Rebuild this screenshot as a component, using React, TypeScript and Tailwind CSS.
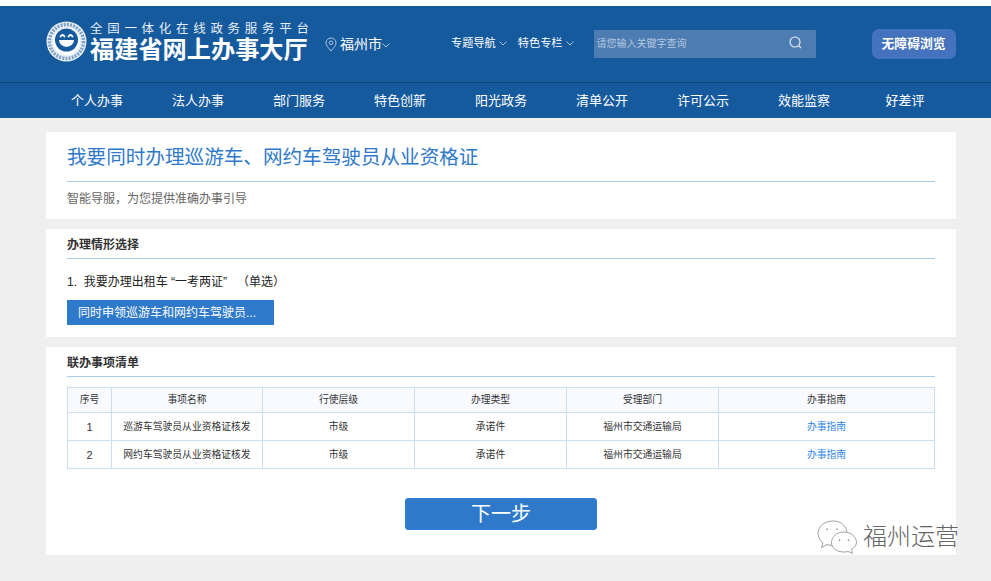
const navItems = ['个人办事', '法人办事', '部门服务', '特色创新', '阳光政务', '清单公开', '许可公示', '效能监察', '好差评']

const rows = [
  { id: 1, name: '巡游车驾驶员从业资格证核发' },
  { id: 2, name: '网约车驾驶员从业资格证核发' },
]

const Chevron = ({ className }: { className: string }) => (
  <svg viewBox="0 0 8 5" className={className} fill="none" stroke="currentColor" strokeWidth="1">
    <path d="M0.5 0.5 L4 4 L7.5 0.5" />
  </svg>
)

const Logo = () => (
  <svg viewBox="0 0 41 41" className="w-[41px] h-[41px] shrink-0">
    <circle cx="20.5" cy="20.5" r="20" fill="#e9eff6" />
    <circle cx="20.5" cy="20.5" r="17" fill="none" stroke="#7fa3c8" strokeWidth="3.5" strokeDasharray="2 1.2" />
    <circle cx="20.5" cy="20.5" r="13.5" fill="#fff" />
    <circle cx="20.5" cy="19" r="11.5" fill="#165a9e" />
    <path d="M13 19 H28 C27.5 28 13.5 28 13 19 Z" fill="#fff" />
    <path d="M14.5 15.5 Q16.5 12.5 18.5 15.5 M22.5 15.5 Q24.5 12.5 26.5 15.5" fill="none" stroke="#fff" strokeWidth="1.8" strokeLinecap="round" />
  </svg>
)

const Watermark = () => (
  <div className="absolute left-[817px] top-[519px] flex items-center gap-[6px]">
    <svg viewBox="0 0 40 35" className="w-[40px] h-[35px]" fill="#fff" stroke="#8a8a8a" strokeWidth="0.8">
      <path d="M16 2 C7 2 1 8 1 14.5 C1 18.5 3.5 22 6 24 L4.5 28.5 L10 25.5 C12 26.2 14 26.5 16 26.5 C25 26.5 30 20.5 30 14.5 C30 8 25 2 16 2 Z" />
      <path d="M27 13 C19.5 13 14.5 18 14.5 23.5 C14.5 29 19.5 33 27 33 C28.5 33 30 32.8 31 32.4 L35.5 34.5 L34.5 30.5 C37.5 28.5 39.5 26 39.5 23.5 C39.5 18 34 13 27 13 Z" />
      <path d="M10 9.5 v1.5 M20 9.5 v1.5 M22.5 20.5 v1.5 M31.5 20.5 v1.5" strokeWidth="1.4" />
    </svg>
    <span className="text-[24px] leading-none font-light text-[#666]">福州运营</span>
  </div>
)

const App = () => {
  return (
    <div className="relative w-[991px] h-[581px] overflow-hidden bg-[#efefef] pt-[6px] font-['Liberation_Sans','Noto_Sans_CJK_SC',sans-serif] before:absolute before:left-0 before:top-0 before:h-[6px] before:w-full before:bg-white">
      <header className="bg-[#165a9e] text-white">
        <div className="h-[77px] border-b border-[#0e4478] flex items-center pl-[46px]">
          <div className="flex items-center -mt-[5px]">
            <Logo />
            <div className="ml-[3px] w-[222px] mt-[1px]">
              <div className="text-[12.5px] leading-[15px] tracking-[4.7px] whitespace-nowrap text-[#e6edf5]">全国一体化在线政务服务平台</div>
              <div className="text-[24.2px] leading-[25px] font-bold whitespace-nowrap">福建省网上办事大厅</div>
            </div>
          </div>
          <svg viewBox="0 0 12 15" className="w-[12px] h-[15px] ml-[13px] mt-[1px] text-[#a9c2dc]" fill="none" stroke="currentColor" strokeWidth="1">
            <path d="M6 14 C3 10.5 1 8.5 1 5.8 C1 3 3.2 1 6 1 C8.8 1 11 3 11 5.8 C11 8.5 9 10.5 6 14 Z" />
            <circle cx="6" cy="5.8" r="1.8" />
          </svg>
          <span className="ml-[3px] text-[14px] leading-none">福州市</span>
          <Chevron className="w-[8px] h-[5px] mt-[2px] text-[#a9c2dc]" />
          <div className="ml-[61px] flex items-center -mt-[1px]">
            <span className="text-[11.2px] leading-none">专题导航</span>
            <Chevron className="w-[8px] h-[5px] ml-[3px] text-[#a9c2dc]" />
            <span className="ml-[11px] text-[11.2px] leading-none">特色专栏</span>
            <Chevron className="w-[8px] h-[5px] ml-[3px] text-[#a9c2dc]" />
          </div>
          <div className="ml-[20px] w-[222px] h-[28px] -mt-[1px] bg-[#4d7cb2] rounded-[1px] flex items-center justify-between pl-[3px] pr-[14px]">
            <span className="text-[10px] text-[#b4c8de]">请您输入关键字查询</span>
            <svg viewBox="0 0 13 13" className="w-[13px] h-[13px] -mt-[3px] text-[#e8eff6]" fill="none" stroke="currentColor" strokeWidth="1.1">
              <circle cx="6" cy="6" r="5" />
              <path d="M9.7 9.7 L12 12" />
            </svg>
          </div>
          <button className="ml-[56px] w-[84px] h-[30px] -mt-[1px] bg-[#4472bd] rounded-[7px] text-[12.8px] font-bold text-white">无障碍浏览</button>
        </div>
        <nav className="h-[35px] flex pl-[46.5px]">
          {navItems.map((item) => (
            <a key={item} className="w-[101px] flex items-center justify-center text-[13px] text-white">
              {item}
            </a>
          ))}
        </nav>
      </header>

      <main className="ml-[46px] w-[910px] mt-[14px] flex flex-col gap-[10px]">
        <section className="h-[87px] bg-white px-[21px]">
          <h1 className="h-[50px] border-b border-[#a9cbe6] pt-[10px] text-[19.6px] leading-[30px] font-normal text-[#2f79cb]">
            我要同时办理巡游车、网约车驾驶员从业资格证
          </h1>
          <p className="mt-[9px] text-[12px] leading-[16px] text-[#666]">智能导服，为您提供准确办事引导</p>
        </section>

        <section className="h-[108px] bg-white px-[21px]">
          <h2 className="h-[30px] border-b border-[#a9cbe6] pt-[8px] text-[12px] leading-[16px] font-bold text-[#333]">办理情形选择</h2>
          <p className="mt-[15px] text-[12px] leading-[16px] text-[#222] whitespace-pre">
            1.  我要办理出租车 “一考两证”   （单选）
          </p>
          <button className="block mt-[10px] w-[207px] h-[25px] bg-[#2f79cb] pl-[11px] text-left text-[12px] text-white whitespace-nowrap">
            同时申领巡游车和网约车驾驶员...
          </button>
        </section>

        <section className="h-[208px] bg-white px-[21px]">
          <h2 className="h-[30px] border-b border-[#a9cbe6] pt-[8px] text-[12px] leading-[16px] font-bold text-[#333]">联办事项清单</h2>
          <table className="mt-[10px] w-[868px] table-fixed border-collapse text-[9.8px] text-[#333] text-center">
            <colgroup>
              <col className="w-[44px]" />
              <col className="w-[151px]" />
              <col className="w-[152px]" />
              <col className="w-[152px]" />
              <col className="w-[152px]" />
              <col />
            </colgroup>
            <thead>
              <tr className="h-[25px] bg-[#f8faff]">
                {['序号', '事项名称', '行使层级', '办理类型', '受理部门', '办事指南'].map((h) => (
                  <th key={h} className="border border-[#cadef1] font-normal">{h}</th>
                ))}
              </tr>
            </thead>
            <tbody>
              {rows.map((r) => (
                <tr key={r.id} className="h-[28px]">
                  <td className="border border-[#cadef1] pt-[1px] text-[11px]">{r.id}</td>
                  <td className="border border-[#cadef1] pt-[1px]">{r.name}</td>
                  <td className="border border-[#cadef1] pt-[1px]">市级</td>
                  <td className="border border-[#cadef1] pt-[1px]">承诺件</td>
                  <td className="border border-[#cadef1] pt-[1px]">福州市交通运输局</td>
                  <td className="border border-[#cadef1] pt-[1px] text-[#2a83e6]">办事指南</td>
                </tr>
              ))}
            </tbody>
          </table>
          <div className="mt-[29px] flex justify-center">
            <button className="w-[192px] h-[32px] bg-[#2f79cb] border border-[#2a7fdc] rounded-[3px] text-[20px] text-white">下一步</button>
          </div>
        </section>
      </main>

      <Watermark />
    </div>
  )
}

export default App
